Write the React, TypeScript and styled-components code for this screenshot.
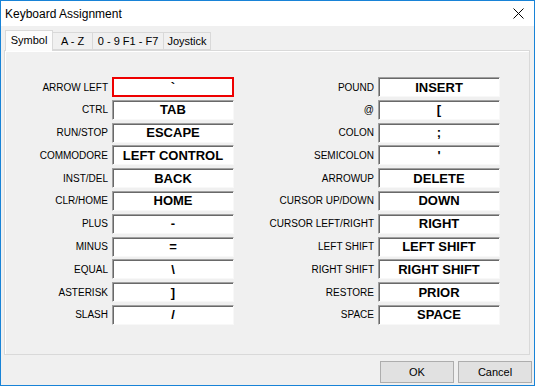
import React from "react";
import styled, { createGlobalStyle } from "styled-components";

const Global = createGlobalStyle`
  html, body { margin: 0; padding: 0; background: #f0f0f0; }
  body { font-family: "Liberation Sans", Arial, sans-serif; }
  * { box-sizing: border-box; }
`;

const Window = styled.div`
  width: 535px;
  height: 386px;
  border: 1px solid #1883d7;
  background: #f0f0f0;
  display: flex;
  flex-direction: column;
  overflow: hidden;
`;

const TitleBar = styled.div`
  height: 25px;
  background: #ffffff;
  display: flex;
  align-items: center;
  justify-content: space-between;
  padding: 0 10px 0 4px;
  flex: none;
`;

const Title = styled.div`
  font-size: 12px;
  color: #000;
  font-family: "Liberation Sans", Arial, sans-serif;
`;

const Close = styled.svg`
  width: 11px;
  height: 11px;
  display: block;
`;

const Body = styled.div`
  flex: 1;
  display: flex;
  flex-direction: column;
  padding: 3px 4px 0 3px;
`;

const TabStrip = styled.div`
  display: flex;
  align-items: flex-end;
  height: 21px;
  padding-left: 1px;
  position: relative;
  z-index: 1;
`;

const Tab = styled.div<{ $active?: boolean; $w: number }>`
  width: ${(p) => p.$w}px;
  height: ${(p) => (p.$active ? 21 : 18)}px;
  margin-bottom: ${(p) => (p.$active ? -1 : 0)}px;
  background: ${(p) => (p.$active ? "#fcfcfc" : "#f0f0f0")};
  border: 1px solid #d9d9d9;
  border-bottom: ${(p) => (p.$active ? "none" : "1px solid #d9d9d9")};
  margin-left: ${(p) => (p.$active ? 0 : -1)}px;
  font-size: 11px;
  color: #000;
  display: flex;
  align-items: ${(p) => (p.$active ? "flex-start" : "center")};
  padding-top: ${(p) => (p.$active ? 3 : 0)}px;
  justify-content: center;
  white-space: nowrap;
  &:first-child { margin-left: 0; }
`;

const Panel = styled.div`
  height: 305px;
  border: 1px solid #d9d9d9;
  box-shadow: inset 1px 1px 0 #ffffff;
  background: #f0f0f0;
  display: flex;
  padding: 26px 0 0 3px;
`;

const Column = styled.div<{ $label: number }>`
  display: grid;
  grid-template-columns: ${(p) => p.$label}px 122px;
  grid-auto-rows: 20px;
  column-gap: 4px;
  row-gap: 2.8px;
  align-content: start;
`;

const Label = styled.div`
  font-size: 10px;
  color: #000;
  text-align: right;
  align-self: center;
  white-space: nowrap;
  line-height: 12px;
  padding-top: 1px;
`;

const Field = styled.div<{ $focus?: boolean }>`
  background: #ffffff;
  font-weight: bold;
  font-size: 13px;
  color: #000;
  display: flex;
  align-items: center;
  justify-content: center;
  white-space: nowrap;
  border-style: solid;
  border-width: ${(p) => (p.$focus ? "2px" : "1px")};
  border-color: ${(p) =>
    p.$focus ? "#ee0000" : "#a0a0a0 #f8f8f8 #f8f8f8 #a0a0a0"};
  box-shadow: ${(p) => (p.$focus ? "none" : "inset 1px 1px 0 #696969")};
`;

const Footer = styled.div`
  display: flex;
  justify-content: flex-end;
  gap: 4px;
  padding: 6px 0 0 0;
  margin-right: -2px;
`;

const Button = styled.button`
  width: 74px;
  height: 22px;
  background: #e1e1e1;
  border: 1px solid #adadad;
  font-family: "Liberation Sans", Arial, sans-serif;
  font-size: 11px;
  color: #000;
  padding: 0;
`;

const left: [string, string][] = [
  ["ARROW LEFT", "`"],
  ["CTRL", "TAB"],
  ["RUN/STOP", "ESCAPE"],
  ["COMMODORE", "LEFT CONTROL"],
  ["INST/DEL", "BACK"],
  ["CLR/HOME", "HOME"],
  ["PLUS", "-"],
  ["MINUS", "="],
  ["EQUAL", "\\"],
  ["ASTERISK", "]"],
  ["SLASH", "/"],
];

const right: [string, string][] = [
  ["POUND", "INSERT"],
  ["@", "["],
  ["COLON", ";"],
  ["SEMICOLON", "'"],
  ["ARROWUP", "DELETE"],
  ["CURSOR UP/DOWN", "DOWN"],
  ["CURSOR LEFT/RIGHT", "RIGHT"],
  ["LEFT SHIFT", "LEFT SHIFT"],
  ["RIGHT SHIFT", "RIGHT SHIFT"],
  ["RESTORE", "PRIOR"],
  ["SPACE", "SPACE"],
];

export default function App() {
  return (
    <>
      <Global />
      <Window>
        <TitleBar>
          <Title>Keyboard Assignment</Title>
          <Close viewBox="0 0 11 11">
            <path d="M0.5 0.5 L10.5 10.5 M10.5 0.5 L0.5 10.5" stroke="#000" strokeWidth="1" />
          </Close>
        </TitleBar>
        <Body>
          <TabStrip>
            <Tab $active $w={48}>Symbol</Tab>
            <Tab $w={41}>A - Z</Tab>
            <Tab $w={72}>0 - 9 F1 - F7</Tab>
            <Tab $w={48}>Joystick</Tab>
          </TabStrip>
          <Panel>
            <Column $label={100}>
              {left.map(([l, v], i) => (
                <React.Fragment key={l}>
                  <Label>{l}</Label>
                  <Field $focus={i === 0}>{v}</Field>
                </React.Fragment>
              ))}
            </Column>
            <Column $label={140}>
              {right.map(([l, v]) => (
                <React.Fragment key={l}>
                  <Label>{l}</Label>
                  <Field>{v}</Field>
                </React.Fragment>
              ))}
            </Column>
          </Panel>
          <Footer>
            <Button>OK</Button>
            <Button>Cancel</Button>
          </Footer>
        </Body>
      </Window>
    </>
  );
}
